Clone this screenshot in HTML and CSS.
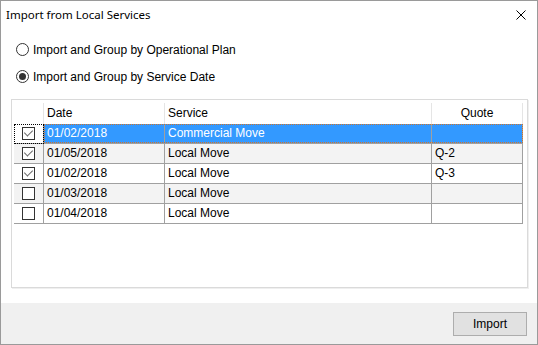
FILE: index.html
```html
<!DOCTYPE html>
<html lang="en">
<head>
  <meta charset="UTF-8">
  <title>Import from Local Services</title>
  <link rel="stylesheet" href="styles.css">
</head>
<body>
  <div class="window">
    <div class="titlebar">
      <span class="title">Import from Local Services</span>
      <svg class="close" width="10" height="10" viewBox="0 0 10 10">
        <path d="M0.5 0.5 L9.5 9.5 M9.5 0.5 L0.5 9.5" stroke="#000" stroke-width="1" fill="none"/>
      </svg>
    </div>

    <div class="content">
      <div class="options">
        <label class="option"><span class="radio"></span>Import and Group by Operational Plan</label>
        <label class="option"><span class="radio checked"></span>Import and Group by Service Date</label>
      </div>

      <div class="listbox">
        <div class="grid">
          <div class="row head">
            <div class="cell"></div>
            <div class="cell">Date</div>
            <div class="cell">Service</div>
            <div class="cell center">Quote</div>
          </div>
          <div class="row selected">
            <div class="cell check focus"><span class="box on"></span></div>
            <div class="cell">01/02/2018</div>
            <div class="cell">Commercial Move</div>
            <div class="cell"></div>
          </div>
          <div class="row alt">
            <div class="cell check"><span class="box on"></span></div>
            <div class="cell">01/05/2018</div>
            <div class="cell">Local Move</div>
            <div class="cell">Q-2</div>
          </div>
          <div class="row">
            <div class="cell check"><span class="box on"></span></div>
            <div class="cell">01/02/2018</div>
            <div class="cell">Local Move</div>
            <div class="cell">Q-3</div>
          </div>
          <div class="row alt">
            <div class="cell check"><span class="box"></span></div>
            <div class="cell">01/03/2018</div>
            <div class="cell">Local Move</div>
            <div class="cell"></div>
          </div>
          <div class="row">
            <div class="cell check"><span class="box"></span></div>
            <div class="cell">01/04/2018</div>
            <div class="cell">Local Move</div>
            <div class="cell"></div>
          </div>
        </div>
      </div>
    </div>

    <div class="footer">
      <button class="btn">Import</button>
    </div>
  </div>
</body>
</html>
```

FILE: styles.css
```css
body {
  margin: 0;
  padding: 0;
  background-color: #fff;
}

.window {
  width: 538px;
  height: 345px;
  box-sizing: border-box;
  border: 1px solid #9a9a9a;
  background-color: #fff;
  display: flex;
  flex-direction: column;
  font-family: "Liberation Sans", Arial, sans-serif;
  font-size: 12px;
  color: #000;
}

.titlebar {
  height: 27px;
  display: flex;
  align-items: center;
  justify-content: space-between;
  padding: 0 11px 0 5px;
}

.title {
  font-family: "Noto Sans", "Open Sans", sans-serif;
  font-size: 11.5px;
}

.content {
  flex: 1;
}

.options {
  padding: 8px 0 0 15px;
}

.option {
  display: flex;
  align-items: center;
  height: 27px;
}

.radio {
  width: 13px;
  height: 13px;
  box-sizing: border-box;
  border: 1px solid #333;
  border-radius: 50%;
  background-color: #fff;
  margin-right: 4px;
  display: flex;
  align-items: center;
  justify-content: center;
}

.radio.checked::before {
  content: "";
  width: 7px;
  height: 7px;
  border-radius: 50%;
  background-color: #333;
}

/* list view */
.listbox {
  margin: 9px 0 0 10px;
  width: 517px;
  height: 189px;
  box-sizing: border-box;
  border: 1px solid #dadada;
  box-shadow: 1px 1px 0 #efefef;
  padding: 3px 0 0 2px;
}

.grid {
  width: 509px;
}

.row {
  display: grid;
  grid-template-columns: 30px 121px 267px 91px;
  height: 20px;
  position: relative;
}

.cell {
  box-sizing: border-box;
  border-right: 1px solid #a0a0a0;
  border-bottom: 1px solid #a0a0a0;
  padding-left: 3px;
  line-height: 19px;
  white-space: nowrap;
}

.row.head {
  height: 21px;
}

.row.head .cell {
  border-right: 1px solid #e5e5e5;
  border-bottom: none;
  line-height: 21px;
}

.center {
  text-align: center;
  padding-left: 0;
}

.row.alt .cell {
  background-color: #f3f3f3;
}

.row.selected .cell {
  background-color: #3399ff;
  color: #fff;
}

.row.selected .cell.check {
  background-color: #fff;
}

.row.selected::after {
  content: "";
  position: absolute;
  left: 30px;
  top: 0;
  right: 0;
  bottom: 1px;
  border: 1px dotted #d0742a;
  pointer-events: none;
}

.cell.check {
  display: flex;
  align-items: center;
  justify-content: center;
  padding-left: 0;
  position: relative;
}

.cell.focus::after {
  content: "";
  position: absolute;
  left: 0;
  top: 0;
  right: -1px;
  bottom: -1px;
  border: 1px dotted #000;
}

.box {
  width: 13px;
  height: 13px;
  box-sizing: border-box;
  border: 1px solid #333;
  background-color: #fff;
  position: relative;
}

.box.on::before {
  content: "";
  position: absolute;
  left: 3px;
  top: 0px;
  width: 4px;
  height: 7px;
  border-right: 1px solid #666;
  border-bottom: 1px solid #666;
  transform: rotate(45deg);
}

/* footer */
.footer {
  height: 41px;
  background-color: #f0f0f0;
  display: flex;
  justify-content: flex-end;
  align-items: flex-start;
  padding: 9px 10px 0 0;
  box-sizing: border-box;
}

.btn {
  width: 74px;
  height: 24px;
  border: 1px solid #adadad;
  background-color: #e1e1e1;
  font-family: "Liberation Sans", Arial, sans-serif;
  font-size: 12px;
  color: #000;
  padding: 0;
}
```
